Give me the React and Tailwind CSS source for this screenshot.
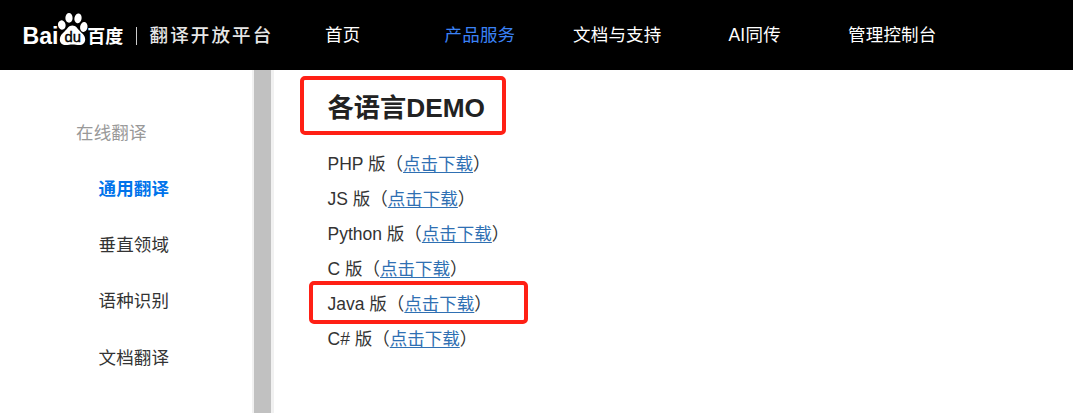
const navItems = [
  { label: '首页', width: 'w-[119.5px]' },
  { label: '产品服务', width: 'w-[128.5px]', active: true },
  { label: '文档与支持', width: 'w-[155.5px]' },
  { label: 'AI同传', width: 'w-[119.5px]' },
  { label: '管理控制台', width: 'w-[100px]' },
];

const sideItems = ['通用翻译', '垂直领域', '语种识别', '文档翻译'];

const demos = ['PHP', 'JS', 'Python', 'C', 'Java', 'C#'];

function Logo() {
  return (
    <svg width="280" height="70" viewBox="0 0 280 70" className="shrink-0" fill="#fff">
      <text x="22.5" y="44" fontSize="23" fontWeight="700" textLength="36" lengthAdjust="spacingAndGlyphs">Bai</text>
      <ellipse cx="61.8" cy="25" rx="3.8" ry="4.7" transform="rotate(-12 61.8 25)" />
      <ellipse cx="69" cy="17.9" rx="3.6" ry="4.9" />
      <ellipse cx="78" cy="18.3" rx="3.6" ry="4.9" transform="rotate(10 78 18.3)" />
      <ellipse cx="83.8" cy="27" rx="3.7" ry="5" transform="rotate(8 83.8 27)" />
      <path d="M72.3 25.5C68.8 25.5 67.4 28.6 65 31C62.2 33.6 59.8 35.8 59.8 39.4C59.8 43 62.4 45 65.8 45C68.4 45 70 44.4 72.5 44.4C75 44.4 76.6 45 79.2 45C82.8 45 85.2 42.8 85.2 39.2C85.2 35.8 82.4 33.6 79.8 31C77.4 28.6 76 25.5 72.3 25.5Z" />
      <text x="64.5" y="42" fontSize="15" fill="#000" stroke="#000" strokeWidth="0.4" textLength="16.5" lengthAdjust="spacingAndGlyphs">du</text>
      <text x="87.2" y="43" fontSize="18.5" fontWeight="700" textLength="36" lengthAdjust="spacingAndGlyphs">百度</text>
      <rect x="136" y="27" width="1" height="18" fill="#ccc" />
      <text x="149.5" y="42.3" fontSize="18.5" letterSpacing="2.15" fill="#e6e6e6" fontWeight="500">翻译开放平台</text>
    </svg>
  );
}

export default function App() {
  return (
    <div className="flex h-[413px] w-[1073px] flex-col overflow-hidden bg-white font-['Liberation_Sans','Noto_Sans_CJK_SC',sans-serif] text-[17.5px] text-[#333]">
      <header className="flex h-[70px] shrink-0 items-center bg-black">
        <Logo />
        <nav className="flex pl-[45px] text-white">
          {navItems.map((item) => (
            <a
              key={item.label}
              className={`${item.width} shrink-0 leading-[35px] tracking-[0.2px] whitespace-nowrap ${item.active ? 'text-[#3b82f6]' : ''}`}
            >
              {item.label}
            </a>
          ))}
        </nav>
      </header>
      <div className="flex min-h-0 flex-1">
        <aside className="flex w-[252px] shrink-0 flex-col pt-[34.5px]">
          <div className="h-[56.25px] shrink-0 pl-[76px] leading-[56.25px] tracking-[0.15px] text-[#999]">在线翻译</div>
          {sideItems.map((label, i) => (
            <a
              key={label}
              className={`h-[56.25px] shrink-0 pl-[98.5px] leading-[56.25px] tracking-[0.15px] ${i === 0 ? 'font-bold text-[#0073eb]' : ''}`}
            >
              {label}
            </a>
          ))}
        </aside>
        <div className="w-[22px] shrink-0 bg-[#f1f1f1] pr-[3px] pl-[2px]">
          <div className="h-full bg-[#c1c1c1]" />
        </div>
        <main className="flex-1 pl-[53.5px]">
          <h1 className="relative h-[77px] pt-[18px] text-[26.25px] leading-[40px] font-bold text-[#222]">
            各语言DEMO
            <span className="absolute top-[6px] -left-[28px] h-[59px] w-[206px] rounded-[5px] border-4 border-[#ff2015]" />
          </h1>
          <ul>
            {demos.map((name) => (
              <li key={name} className="relative h-[35px] leading-[35px] whitespace-nowrap">
                {name} 版（
                <a className="text-[#2f70b3] underline decoration-1 underline-offset-2">点击下载</a>
                ）
                {name === 'Java' && (
                  <span className="absolute -top-[6px] -left-[19px] h-[43px] w-[219px] rounded-[5px] border-4 border-[#ff2015]" />
                )}
              </li>
            ))}
          </ul>
        </main>
      </div>
    </div>
  );
}
